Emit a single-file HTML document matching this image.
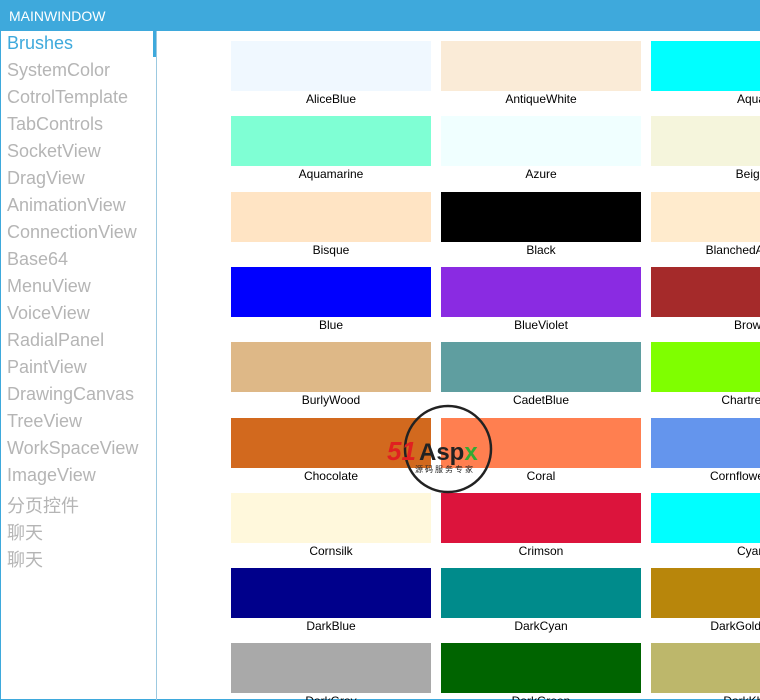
<!DOCTYPE html>
<html><head><meta charset="utf-8"><style>
*{margin:0;padding:0;box-sizing:border-box}
html,body{width:760px;height:700px;overflow:hidden}
body{background:#fff;font-family:"Liberation Sans","Noto Sans CJK SC",sans-serif;position:relative}
.title{position:absolute;left:0;top:0;width:760px;height:31px;background:#3ea9dc;color:#fff;font-size:14px;line-height:33px;padding-left:9px}
.frame{position:absolute;left:0;top:31px;width:760px;height:669px;border-left:1px solid #3ea9dc;border-bottom:1px solid #3ea9dc}
.side{position:absolute;left:0;top:31px;width:157px;height:669px;border-right:1px solid #9cc9e0}
.ind{position:absolute;left:153px;top:31px;width:3px;height:26px;background:#3ea9dc}
.it{position:absolute;left:7px;font-size:18px;color:#b5b5b5;white-space:nowrap}
.sw{position:absolute;width:200px;height:50px}
.lb{position:absolute;width:200px;text-align:center;font-size:12px;color:#000;white-space:nowrap}
</style></head><body>
<div class="title">MAINWINDOW</div>
<div class="frame"></div>
<div class="side"></div>
<div class="ind"></div>
<div id="items"></div>
<div id="grid"></div>
<svg style="position:absolute;left:385px;top:404px" width="130" height="90">
<circle cx="63" cy="45" r="43" fill="none" stroke="#222" stroke-width="2.5"/>
<text x="2" y="56" font-family="Liberation Sans" font-style="italic" font-weight="bold" font-size="26" fill="#e02020">51</text>
<text x="34" y="56" font-family="Liberation Sans" font-weight="bold" font-size="24" fill="#222">Asp<tspan fill="#3a3">x</tspan></text>
<text x="30" y="68" font-family="Noto Sans CJK SC" font-size="8" fill="#222" letter-spacing="2">源码服务专家</text>
</svg>
<script>
var names=["Brushes","SystemColor","CotrolTemplate","TabControls","SocketView","DragView","AnimationView","ConnectionView","Base64","MenuView","VoiceView","RadialPanel","PaintView","DrawingCanvas","TreeView","WorkSpaceView","ImageView","分页控件","聊天","聊天"];
var h="";names.forEach(function(n,i){h+='<div class="it" style="top:'+(33+i*27)+'px;'+(i==0?'color:#3ea9dc':'')+'">'+n+'</div>'});
document.getElementById("items").innerHTML=h;
var c=[["AliceBlue","#f0f8ff"],["AntiqueWhite","#faebd7"],["Aqua","#00ffff"],["Aquamarine","#7fffd4"],["Azure","#f0ffff"],["Beige","#f5f5dc"],["Bisque","#ffe4c4"],["Black","#000"],["BlanchedAlmond","#ffebcd"],["Blue","#0000ff"],["BlueViolet","#8a2be2"],["Brown","#a52a2a"],["BurlyWood","#deb887"],["CadetBlue","#5f9ea0"],["Chartreuse","#7fff00"],["Chocolate","#d2691e"],["Coral","#ff7f50"],["CornflowerBlue","#6495ed"],["Cornsilk","#fff8dc"],["Crimson","#dc143c"],["Cyan","#00ffff"],["DarkBlue","#00008b"],["DarkCyan","#008b8b"],["DarkGoldenrod","#b8860b"],["DarkGray","#a9a9a9"],["DarkGreen","#006400"],["DarkKhaki","#bdb76b"]];
var g="";c.forEach(function(e,i){var x=231+(i%3)*210,y=41+Math.floor(i/3)*75.3;
g+='<div class="sw" style="left:'+x+'px;top:'+y+'px;background:'+e[1]+'"></div><div class="lb" style="left:'+x+'px;top:'+(y+51)+'px">'+e[0]+'</div>'});
document.getElementById("grid").innerHTML=g;
</script>
</body></html>
